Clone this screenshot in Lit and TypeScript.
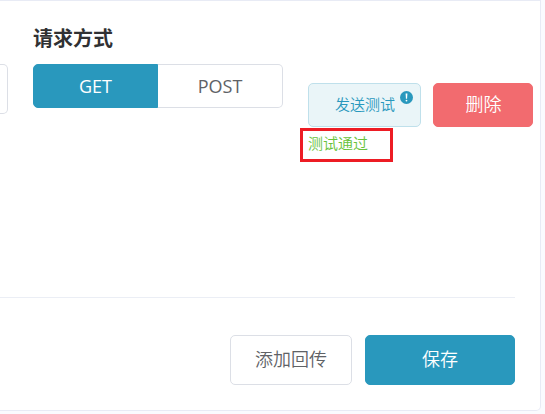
import { LitElement, html, css } from "lit";
import { customElement, state } from "lit/decorators.js";
import { classMap } from "lit/directives/class-map.js";

@customElement("app-root")
class AppRoot extends LitElement {
  @state() private method = "GET";

  static styles = css`
    :host {
      display: block;
      width: 545px;
      height: 414px;
      overflow: hidden;
      background: #fafbfe;
      font-family: "Open Sans", "Noto Sans CJK SC", sans-serif;
      color: #606266;
    }
    * { box-sizing: border-box; }
    .card {
      width: 541px;
      height: 411px;
      background: #fff;
      border: 1px solid #e8ebf5;
      border-left: 0;
      border-radius: 0 0 5px 0;
      display: flex;
      flex-direction: column;
    }
    .fields {
      display: flex;
      height: 296px;
      flex: none;
    }
    .field-end {
      width: 8px;
      height: 50px;
      margin-top: 63px;
      border: 1px solid #dcdfe6;
      border-left: 0;
      border-radius: 0 5px 5px 0;
    }
    .method {
      width: 250px;
      margin-left: 25px;
      padding-top: 21px;
    }
    .label {
      height: 32px;
      margin-bottom: 10px;
      line-height: 32px;
      font-size: 20px;
      font-weight: 700;
      color: #303133;
      font-family: "Noto Sans CJK SC", sans-serif;
    }
    .switch { display: flex; height: 44px; }
    .option, .btn {
      font-family: inherit;
      margin: 0;
      padding: 0;
      border: 1px solid #dcdfe6;
      background: #fff;
      color: #606266;
      display: flex;
      align-items: center;
      justify-content: center;
      white-space: nowrap;
    }
    .option { width: 125px; font-size: 18px; font-weight: 400; }
    .option:first-child { border-radius: 5px 0 0 5px; }
    .option:last-child { border-radius: 0 5px 5px 0; border-left: 0; }
    .option.on { background: #2998bd; border-color: #2998bd; color: #fff; }
    .btn { border-radius: 5px; font-size: 18px; font-weight: 350; }
    .test { width: 113px; margin: 82px 0 0 25px; }
    .send {
      width: 113px;
      height: 44px;
      padding: 0 0 3px 18px;
      font-size: 15px;
      color: #2998bd;
      background: #eaf5f8;
      border-color: #bfe0eb;
    }
    .info { width: 13px; height: 13px; margin: -12px -1px 0 5px; }
    .result {
      width: 93px;
      height: 34px;
      margin: 1px 0 0 -8px;
      border: 3px solid #ed1c24;
      padding-left: 5px;
      font-size: 15px;
      line-height: 24px;
      font-weight: 350;
      color: #67c23a;
    }
    .remove {
      width: 100px;
      height: 44px;
      margin: 82px 0 0 12px;
      padding: 0 0 4px 1px;
      color: #fff;
      background: #f26b6f;
      border-color: #f26b6f;
    }
    .footer {
      margin-right: 25px;
      border-top: 1px solid #ebeef5;
      padding-top: 37px;
      display: flex;
      justify-content: flex-end;
      gap: 13px;
    }
    .add { width: 122px; height: 50px; padding-bottom: 4px; }
    .save {
      width: 150px;
      height: 50px;
      padding-bottom: 4px;
      color: #fff;
      background: #2998bd;
      border-color: #2998bd;
    }
  `;

  private option(name: string) {
    return html`<button
      class=${classMap({ option: true, on: this.method === name })}
      @click=${() => (this.method = name)}
    >${name}</button>`;
  }

  render() {
    return html`
      <section class="card">
        <div class="fields">
          <div class="field-end"></div>
          <div class="method">
            <div class="label">请求方式</div>
            <div class="switch">${this.option("GET")}${this.option("POST")}</div>
          </div>
          <div class="test">
            <button class="btn send">
              <span>发送测试</span>
              <svg class="info" viewBox="0 0 13 13">
                <circle cx="6.5" cy="6.5" r="6.5" fill="#2998bd" />
                <path d="M5.6 2.5h1.8L7.1 7.7H5.9z" fill="#fff" />
                <circle cx="6.5" cy="9.6" r=".9" fill="#fff" />
              </svg>
            </button>
            <div class="result">测试通过</div>
          </div>
          <button class="btn remove">删除</button>
        </div>
        <div class="footer">
          <button class="btn add">添加回传</button>
          <button class="btn save">保存</button>
        </div>
      </section>
    `;
  }
}
